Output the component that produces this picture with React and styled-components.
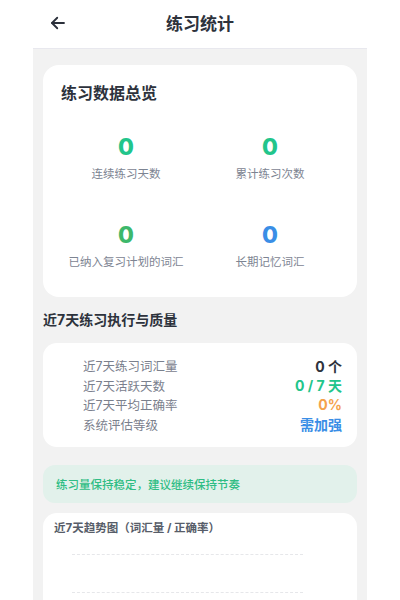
import styled, { createGlobalStyle } from 'styled-components';

const GlobalStyle = createGlobalStyle`
  html, body {
    margin: 0;
    padding: 0;
    background: #ffffff;
    font-family: Inter, "Noto Sans CJK SC", "Noto Sans", sans-serif;
  }
`;

const Page = styled.div`
  width: 400px;
  height: 600px;
  overflow: hidden;
  display: flex;
  flex-direction: column;
  align-items: center;
`;

const Header = styled.header`
  width: 100%;
  height: 48px;
  flex-shrink: 0;
  box-sizing: border-box;
  padding-bottom: 3px;
  display: grid;
  grid-template-columns: 100px 1fr 100px;
  align-items: center;
`;

const BackButton = styled.button`
  border: none;
  background: none;
  padding: 0;
  margin-left: 49px;
  width: 20px;
  height: 20px;
  display: flex;
  align-items: center;
  color: #2b303b;
  cursor: pointer;
`;

const HeaderTitle = styled.h1`
  margin: 0;
  text-align: center;
  font-size: 17px;
  font-weight: 700;
  color: #2d323c;
`;

const Content = styled.main`
  width: 334px;
  flex: 1;
  background: #f2f2f2;
  border-top: 1px solid #e8e8ee;
  box-sizing: border-box;
  padding: 16px 10px 0;
  display: flex;
  flex-direction: column;
  gap: 10px;
`;

const Card = styled.section`
  background: #ffffff;
  border-radius: ${(p) => p.$radius || 14}px;
  padding: ${(p) => p.$pad};
`;

const CardTitle = styled.h2`
  margin: 0 0 ${(p) => p.$gap || 0}px;
  font-size: ${(p) => p.$size || 16}px;
  font-weight: 700;
  color: ${(p) => p.$color || '#2d323c'};
`;

const StatGrid = styled.div`
  display: grid;
  grid-template-columns: 1fr 1fr;
  row-gap: 38px;
  margin: 0 -3px 0 -7px;
`;

const Stat = styled.div`
  display: flex;
  flex-direction: column;
  align-items: center;
  gap: 4px;
`;

const StatValue = styled.div`
  font-size: 23px;
  font-weight: 800;
  line-height: 28px;
  color: ${(p) => p.$color};
`;

const StatLabel = styled.div`
  font-size: 11.5px;
  color: #7d8492;
  line-height: 18px;
`;

const SectionTitle = styled.h3`
  margin: 2px 0 4px;
  font-size: 14px;
  font-weight: 700;
  color: #2d323c;
`;

const Rows = styled.div`
  display: flex;
  flex-direction: column;
`;

const Row = styled.div`
  display: flex;
  justify-content: space-between;
  align-items: center;
  height: 19.5px;
`;

const RowLabel = styled.span`
  font-size: 12.5px;
  color: #7a808d;
`;

const RowValue = styled.span`
  font-size: 14px;
  font-weight: 700;
  color: ${(p) => p.$color};
`;

const Tip = styled.div`
  margin-top: 8px;
  background: #e2f1eb;
  border-radius: 12px;
  height: 38px;
  display: flex;
  align-items: center;
  padding: 0 13px;
  font-size: 11.5px;
  font-weight: 500;
  color: #2fbd84;
`;

const ChartArea = styled.div`
  margin: 19px 43px 0 18px;
  display: flex;
  flex-direction: column;
  gap: 37px;
`;

const GridLine = styled.div`
  border-top: 1px dashed #e6e7ea;
`;

const stats = [
  { value: 0, label: '连续练习天数', color: '#22c58b' },
  { value: 0, label: '累计练习次数', color: '#22c58b' },
  { value: 0, label: '已纳入复习计划的词汇', color: '#3db86b' },
  { value: 0, label: '长期记忆词汇', color: '#3a8ee6' },
];

const rows = [
  { label: '近7天练习词汇量', value: '0 个', color: '#2d323c' },
  { label: '近7天活跃天数', value: '0 / 7 天', color: '#22c58b' },
  { label: '近7天平均正确率', value: '0%', color: '#f4a24c' },
  { label: '系统评估等级', value: '需加强', color: '#3a8ee6' },
];

export default function App() {
  return (
    <>
      <GlobalStyle />
      <Page>
        <Header>
          <BackButton aria-label="返回">
            <svg width="18" height="18" viewBox="0 0 24 24" fill="none" stroke="currentColor" strokeWidth="2.4" strokeLinecap="round" strokeLinejoin="round">
              <path d="M20 12H4" />
              <path d="M11 5l-7 7 7 7" />
            </svg>
          </BackButton>
          <HeaderTitle>练习统计</HeaderTitle>
          <span />
        </Header>
        <Content>
          <Card $radius={16} $pad="15px 18px 26px">
            <CardTitle $gap={29}>练习数据总览</CardTitle>
            <StatGrid>
              {stats.map((s) => (
                <Stat key={s.label}>
                  <StatValue $color={s.color}>{s.value}</StatValue>
                  <StatLabel>{s.label}</StatLabel>
                </Stat>
              ))}
            </StatGrid>
          </Card>

          <SectionTitle>近7天练习执行与质量</SectionTitle>

          <Card $pad="13px 15px 13px 40px">
            <Rows>
              {rows.map((r) => (
                <Row key={r.label}>
                  <RowLabel>{r.label}</RowLabel>
                  <RowValue $color={r.color}>{r.value}</RowValue>
                </Row>
              ))}
            </Rows>
          </Card>

          <Tip>练习量保持稳定，建议继续保持节奏</Tip>

          <Card $pad="6px 11px 20px">
            <CardTitle $size={11.5} $color="#575d69">近7天趋势图（词汇量 / 正确率）</CardTitle>
            <ChartArea>
              <GridLine />
              <GridLine />
              <GridLine />
            </ChartArea>
          </Card>
        </Content>
      </Page>
    </>
  );
}
